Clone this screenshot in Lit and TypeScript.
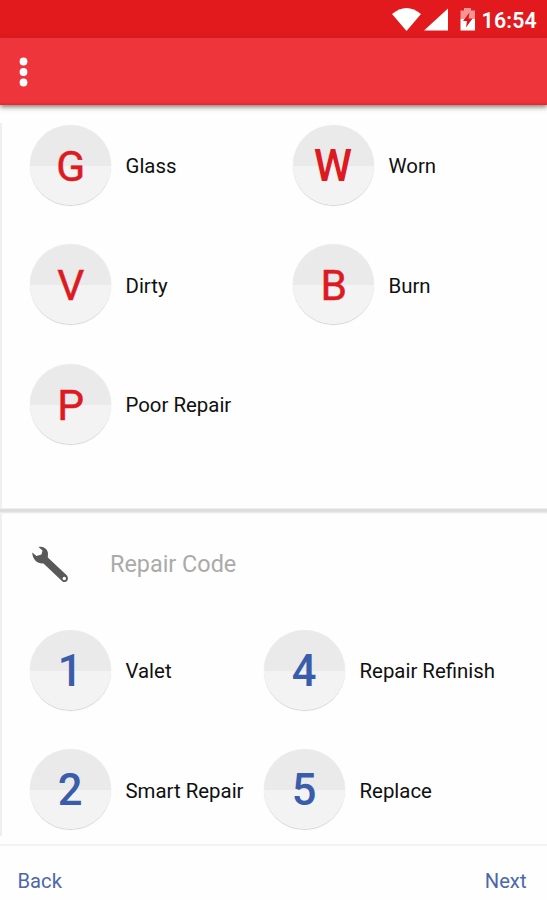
import { LitElement, html, css } from "lit";
import { customElement, property } from "lit/decorators.js";

@customElement("code-option")
class CodeOption extends LitElement {
  @property() code = "";
  @property() label = "";
  @property({ reflect: true }) tone = "red";
  @property({ type: Boolean, reflect: true }) strong = false;

  static styles = css`
    :host {
      display: flex;
      align-items: center;
      height: 81px;
      color: #dd1a22;
    }
    :host([tone="blue"]) {
      color: #3a5dab;
    }
    .disc {
      box-sizing: border-box;
      flex: none;
      width: 81px;
      height: 80px;
      margin-bottom: 1px;
      padding-left: 1.5px;
      border-radius: 50%;
      background: linear-gradient(#eaeaea 0 51.5%, #f3f3f3 51.5%);
      box-shadow: 0 1px 1px rgba(0, 0, 0, 0.17), 0 0 1px rgba(0, 0, 0, 0.08);
      font-size: 42.5px;
      font-weight: 400;
      -webkit-text-stroke: 0.5px currentColor;
      line-height: 83px;
      text-align: center;
    }
    :host([strong]) .disc {
      padding-left: 0;
      font-size: 43.5px;
      font-weight: 500;
      -webkit-text-stroke: 0;
    }
    .label {
      margin-left: 15px;
      color: #101010;
      font-size: 20.4px;
      line-height: 28px;
      padding-top: 1.4px;
      white-space: nowrap;
    }
  `;

  render() {
    return html`<div class="disc">${this.code}</div>
      <div class="label">${this.label}</div>`;
  }
}

@customElement("app-root")
class AppRoot extends LitElement {
  static styles = css`
    :host {
      display: flex;
      flex-direction: column;
      height: 900px;
      overflow: hidden;
      background: #fefefe;
      font-family: Roboto, sans-serif;
    }
    .status {
      display: flex;
      align-items: center;
      justify-content: flex-end;
      height: 38px;
      padding-right: 10px;
      box-sizing: border-box;
      background: #e2191d;
      color: #fff;
      font-size: 21.3px;
      font-weight: 600;
      flex: none;
    }
    .status svg {
      margin-right: 6px;
    }
    .time {
      padding-top: 3px;
      letter-spacing: 0.2px;
    }
    .bar {
      flex: none;
      display: flex;
      align-items: center;
      height: 67px;
      padding-left: 19px;
      background: linear-gradient(#ee353b 0 95%, #e5272d);
      box-shadow: 0 2px 5px rgba(70, 70, 50, 0.7);
      z-index: 1;
    }
    .codes {
      box-sizing: border-box;
      display: grid;
      grid-auto-rows: 81px;
      row-gap: 38.4px;
      padding-left: 27.5px;
    }
    .damage {
      grid-template-columns: 263px 1fr;
      height: 385px;
      padding-top: 2px;
      flex: none;
    }
    .repair {
      grid-template-columns: 234px 1fr;
      padding-top: 15px;
    }
    .content {
      flex: 1;
      min-height: 0;
      margin-top: 18px;
      display: flex;
      flex-direction: column;
      margin-bottom: 8px;
      border-left: 2px solid #efefef;
    }
    .divider {
      flex: none;
      height: 6px;
      margin-left: -2px;
      background: linear-gradient(#f4f4f4, #dadada 30%, #dedede 55%, #fafafa);
    }
    .heading {
      flex: none;
      display: flex;
      align-items: center;
      height: 101px;
      padding-left: 29px;
      color: #aaa;
      font-size: 23.4px;
    }
    .heading svg {
      margin-right: 40px;
    }
    .heading span {
      padding-bottom: 2px;
    }
    .footer {
      flex: none;
      display: flex;
      align-items: center;
      justify-content: space-between;
      box-sizing: border-box;
      height: 56px;
      padding: 15px 20.5px 0 17.5px;
      border-top: 2px solid #f3f3f3;
      color: #4c68ab;
      font-size: 20.2px;
    }
  `;

  private readonly damage = [
    { code: "G", label: "Glass" },
    { code: "W", label: "Worn", strong: true },
    { code: "V", label: "Dirty" },
    { code: "B", label: "Burn" },
    { code: "P", label: "Poor Repair" },
  ];

  private readonly repair = [
    { code: "1", label: "Valet" },
    { code: "4", label: "Repair Refinish" },
    { code: "2", label: "Smart Repair" },
    { code: "5", label: "Replace" },
  ];

  render() {
    return html`
      <div class="status">
        <svg width="84" height="26" viewBox="0 0 84 26" fill="#fff">
          <path d="M0 8Q14.500 -4 29 8L14.500 25Z" />
          <path d="M56 2.500V24.500H32Z" />
          <path
            fill="#f79496"
            d="M68.500 4.500H72V2H79V4.500H83V13H68.500Z"
          />
          <path d="M68.500 13H83V24.500H68.500Z" />
          <path fill="#d9161b" d="M77.500 6.500L71 15H75L74 21.500L80.500 12.500H76.500Z" />
        </svg>
        <span class="time">16:54</span>
      </div>
      <div class="bar">
        <svg width="9" height="30" viewBox="0 0 9 30" fill="#fff">
          <circle cx="4.500" cy="4.500" r="3.900" />
          <circle cx="4.500" cy="15" r="3.900" />
          <circle cx="4.500" cy="25.500" r="3.900" />
        </svg>
      </div>
      <div class="content">
        <div class="codes damage">
          ${this.damage.map(
            (d) =>
              html`<code-option
                .code=${d.code}
                .label=${d.label}
                ?strong=${d.strong}
              ></code-option>`
          )}
        </div>
        <div class="divider"></div>
        <div class="heading">
          <svg width="39" height="38" viewBox="0 0 39 38">
            <path
              fill="#595959"
              d="M7.500 1C12 -.5 17 3 17 7.500L16.800 11.500L36 29.500C38.500 33.500 35.500 37.500 31.500 35.500L12.500 17.500C7 18 1.500 14 1.200 6.500L5.500 10L10.500 8.500L11.500 4.500Z"
            />
            <circle cx="33.300" cy="32.500" r="1.700" fill="#fefefe" />
          </svg>
          <span>Repair Code</span>
        </div>
        <div class="codes repair">
          ${this.repair.map(
            (r) =>
              html`<code-option
                tone="blue"
                strong
                .code=${r.code}
                .label=${r.label}
              ></code-option>`
          )}
        </div>
      </div>
      <div class="footer"><span>Back</span><span>Next</span></div>
    `;
  }
}
